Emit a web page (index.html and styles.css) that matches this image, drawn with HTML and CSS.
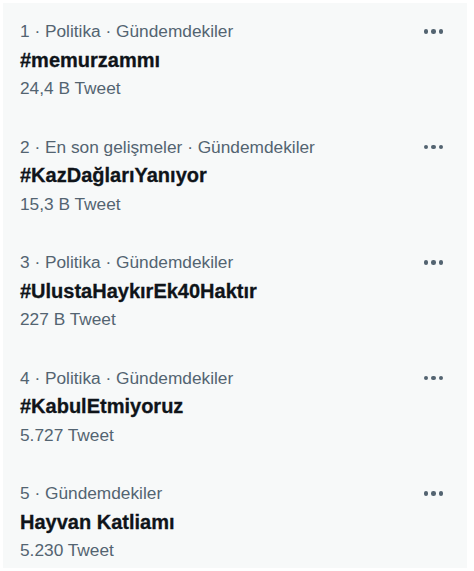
FILE: index.html
```html
<!DOCTYPE html>
<html lang="tr">
<head>
<meta charset="utf-8">
<link rel="stylesheet" href="styles.css">
</head>
<body>
<div class="card">
  <div class="trend">
    <div class="info">
      <div class="meta">1 · Politika · Gündemdekiler</div>
      <div class="title">#memurzammı</div>
      <div class="count">24,4 B Tweet</div>
    </div>
    <div class="more"><span></span><span></span><span></span></div>
  </div>
  <div class="trend">
    <div class="info">
      <div class="meta">2 · En son gelişmeler · Gündemdekiler</div>
      <div class="title">#KazDağlarıYanıyor</div>
      <div class="count">15,3 B Tweet</div>
    </div>
    <div class="more"><span></span><span></span><span></span></div>
  </div>
  <div class="trend">
    <div class="info">
      <div class="meta">3 · Politika · Gündemdekiler</div>
      <div class="title">#UlustaHaykırEk40Haktır</div>
      <div class="count">227 B Tweet</div>
    </div>
    <div class="more"><span></span><span></span><span></span></div>
  </div>
  <div class="trend">
    <div class="info">
      <div class="meta">4 · Politika · Gündemdekiler</div>
      <div class="title">#KabulEtmiyoruz</div>
      <div class="count">5.727 Tweet</div>
    </div>
    <div class="more"><span></span><span></span><span></span></div>
  </div>
  <div class="trend">
    <div class="info">
      <div class="meta">5 · Gündemdekiler</div>
      <div class="title">Hayvan Katliamı</div>
      <div class="count">5.230 Tweet</div>
    </div>
    <div class="more"><span></span><span></span><span></span></div>
  </div>
</div>
</body>
</html>
```
FILE: styles.css
```css
html, body {
  margin: 0;
  padding: 0;
  background: #ffffff;
}
body {
  font-family: "Liberation Sans", Arial, sans-serif;
  padding: 3px 7px 3px 3px;
}
.card {
  background: #f7f9f9;
  height: 565px;
  overflow: hidden;
}
.trend {
  display: flex;
  justify-content: space-between;
  align-items: flex-start;
  padding: 14px 24px 16px 17px;
}
.info {
  display: flex;
  flex-direction: column;
}
.meta, .count {
  font-size: 17.3px;
  line-height: 28.5px;
  color: #536471;
}
.title {
  font-size: 20px;
  line-height: 28.5px;
  font-weight: bold;
  color: #0f1419;
  -webkit-text-stroke: 0.3px #0f1419;
}
.more {
  display: flex;
  gap: 3px;
  height: 28.5px;
  align-items: center;
}
.more span {
  width: 4.5px;
  height: 4.5px;
  border-radius: 50%;
  background: #536471;
}
```
